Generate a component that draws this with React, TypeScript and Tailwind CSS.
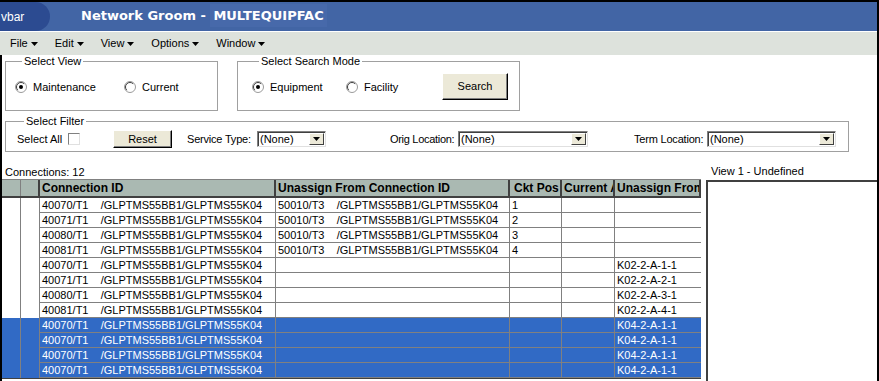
import React from "react";

const SANS = "font-['Liberation_Sans',Arial,sans-serif]";

type Row = {
  conn: string;
  from: string;
  pos: string;
  unassign: string;
  selected?: boolean;
};

const PATH = "/GLPTMS55BB1/GLPTMS55K04";

const rows: Row[] = [
  { conn: "40070/T1", from: "50010/T3", pos: "1", unassign: "" },
  { conn: "40071/T1", from: "50010/T3", pos: "2", unassign: "" },
  { conn: "40080/T1", from: "50010/T3", pos: "3", unassign: "" },
  { conn: "40081/T1", from: "50010/T3", pos: "4", unassign: "" },
  { conn: "40070/T1", from: "", pos: "", unassign: "K02-2-A-1-1" },
  { conn: "40071/T1", from: "", pos: "", unassign: "K02-2-A-2-1" },
  { conn: "40080/T1", from: "", pos: "", unassign: "K02-2-A-3-1" },
  { conn: "40081/T1", from: "", pos: "", unassign: "K02-2-A-4-1" },
  { conn: "40070/T1", from: "", pos: "", unassign: "K04-2-A-1-1", selected: true },
  { conn: "40070/T1", from: "", pos: "", unassign: "K04-2-A-1-1", selected: true },
  { conn: "40070/T1", from: "", pos: "", unassign: "K04-2-A-1-1", selected: true },
  { conn: "40070/T1", from: "", pos: "", unassign: "K04-2-A-1-1", selected: true },
];

const Caret = () => (
  <svg width="7" height="4" viewBox="0 0 7 4" className="ml-[3px]">
    <path d="M0 0h7L3.5 4z" fill="#000" />
  </svg>
);

const Radio = ({ checked }: { checked?: boolean }) => (
  <svg width="12" height="12" viewBox="0 0 12 12" className="shrink-0">
    <circle cx="6" cy="6" r="5.5" fill="#fff" stroke="#9a9a9a" strokeWidth="1" />
    <path d="M2.8 9.2A4.5 4.5 0 0 1 9.2 2.8" stroke="#404040" strokeWidth="1" fill="none" />
    {checked && <circle cx="6" cy="6" r="2" fill="#000" />}
  </svg>
);

const Select = ({ w }: { w: string }) => (
  <div
    className={`${w} shrink-0 h-[16px] flex items-center bg-white border border-t-[#808080] border-l-[#808080] border-b-[#e0e0e0] border-r-[#e0e0e0] shadow-[inset_1px_1px_0_#404040]`}
  >
    <span className="flex-1 pl-[2px] text-[11px] leading-[14px]">(None)</span>
    <div className="w-[15px] h-[12px] mr-[1px] bg-[#ece9d8] border border-t-white border-l-white border-b-[#404040] border-r-[#404040] flex items-center justify-center">
      <svg width="7" height="4" viewBox="0 0 7 4">
        <path d="M0 0h7L3.5 4z" fill="#000" />
      </svg>
    </div>
  </div>
);

const Button = ({ label, className }: { label: string; className: string }) => (
  <div
    className={`${className} shrink-0 bg-[#ece9d8] border border-t-white border-l-white border-b-black border-r-black shadow-[inset_-1px_-1px_0_#808080] flex items-center justify-center text-[11px]`}
  >
    {label}
  </div>
);

const cols = ["w-[19px]", "w-[19px]", "w-[236px]", "w-[234px]", "w-[52px]", "w-[53px]", "w-[86px]"];

export default function App() {
  return (
    <div className={`w-[879px] h-[381px] overflow-hidden bg-white border-t-2 border-r-2 border-black text-black ${SANS}`}>
      {/* title bar */}
      <div className="h-[30px] bg-[#4265a5] flex items-center border-b border-white">
        <div className="w-[50px] h-full rounded-r-full bg-[#2c4b91] flex items-center text-white text-[12px]">
          <span className="pl-[1px]">vbar</span>
        </div>
        <div className="ml-[31px] flex items-center text-white font-bold text-[13px] font-['DejaVu_Sans',Verdana,sans-serif] -mt-[2px]">
          <span className="whitespace-pre">Network Groom - </span>
          <span className="bg-[#4769aa] px-[3px] py-[2px]">MULTEQUIPFAC</span>
        </div>
      </div>

      {/* menu */}
      <div className="h-[23px] bg-[#dde2dc] flex items-center pl-[10px] gap-[17px] text-[11px]">
        {["File", "Edit", "View", "Options", "Window"].map((m) => (
          <div key={m} className="flex items-center">
            <span>{m}</span>
            <Caret />
          </div>
        ))}
      </div>

      {/* content */}
      <div className="border-l-2 border-black h-[326px] flex flex-col text-[11px]">
        <div className="flex pl-[3px] gap-[19px]">
          <fieldset className="w-[213px] h-[56px] border border-[#a0a0a0] pl-[9px] flex items-center">
            <legend className="ml-[7px] px-[2px] leading-[13px]">Select View</legend>
            <div className="flex items-center w-[109px] gap-[6px] pb-[4px]">
              <Radio checked />
              <span>Maintenance</span>
            </div>
            <div className="flex items-center gap-[6px] pb-[4px]">
              <Radio />
              <span>Current</span>
            </div>
          </fieldset>
          <fieldset className="w-[283px] h-[56px] border border-[#a0a0a0] pl-[14px] flex items-center">
            <legend className="ml-[7px] px-[2px] leading-[13px]">Select Search Mode</legend>
            <div className="flex items-center w-[94px] gap-[6px] pb-[4px]">
              <Radio checked />
              <span>Equipment</span>
            </div>
            <div className="flex items-center w-[96px] gap-[6px] pb-[4px]">
              <Radio />
              <span>Facility</span>
            </div>
            <Button label="Search" className="w-[66px] h-[27px] mb-[6px]" />
          </fieldset>
        </div>

        <fieldset className="ml-[3px] mt-[4px] w-[844px] h-[37px] border border-[#a0a0a0] pl-[11px] pt-[2px] flex items-center whitespace-nowrap">
          <legend className="ml-[7px] px-[2px] leading-[13px]">Select Filter</legend>
          <span className="w-[51px] shrink-0">Select All</span>
          <div className="w-[12px] h-[12px] shrink-0 bg-white border border-t-[#808080] border-l-[#808080] border-b-[#e0e0e0] border-r-[#e0e0e0]" />
          <Button label="Reset" className="ml-[33px] w-[59px] h-[18px]" />
          <span className="ml-[15px] w-[70px] shrink-0 tracking-[-0.2px]">Service Type:</span>
          <Select w="w-[69px]" />
          <span className="ml-[64px] w-[68px] shrink-0 tracking-[-0.3px]">Orig Location:</span>
          <Select w="w-[130px]" />
          <span className="ml-[46px] w-[73px] shrink-0 tracking-[-0.2px]">Term Location:</span>
          <Select w="w-[129px]" />
        </fieldset>

        <div className="flex gap-[5px] flex-1">
          {/* grid */}
          <div className="w-[699px] flex flex-col">
            <div className="h-[27px] pt-[13px] pl-[3px] leading-[14px]">Connections: 12</div>
            <div className="border-t border-[#808080] flex-1 flex flex-col overflow-hidden">
              <div className="h-[18px] flex shrink-0 bg-[#aab9b2] border-b-2 border-[#404040] text-[12px] font-bold">
                {["", "", "Connection ID", "Unassign From Connection ID", "Ckt Pos", "Current Assign", "Unassign From Location"].map(
                  (h, i) => (
                    <div
                      key={i}
                      className={`${cols[i]} shrink-0 h-full overflow-hidden whitespace-nowrap leading-[17px] ${
                        i === 0 ? "border-r border-[#808080]" : "border-r-2 border-[#404040]"
                      } ${i === 4 ? "pl-[4px]" : "pl-[2px]"} ${i === 6 ? "border-r-0" : ""}`}
                    >
                      {h}
                    </div>
                  )
                )}
              </div>
              {rows.map((r, idx) => {
                const line = r.selected ? "border-[#7d8aa6]" : "border-[#808080]";
                const cells = [
                  "",
                  "",
                  `${r.conn}    ${PATH}`,
                  r.from ? `${r.from}    ${PATH}` : "",
                  r.pos,
                  "",
                  r.unassign,
                ];
                return (
                  <div
                    key={idx}
                    className={`h-[15px] flex shrink-0 ${r.selected ? "bg-[#316ac5] text-white" : "bg-white"}`}
                  >
                    {cells.map((c, i) => (
                      <div
                        key={i}
                        className={`${cols[i]} shrink-0 h-full overflow-hidden whitespace-pre leading-[14px] pl-[2px] border-[#808080] ${
                          i < 6 ? "border-r" : ""
                        } ${i >= 2 ? `border-b ${line}` : ""}`}
                      >
                        {c}
                      </div>
                    ))}
                  </div>
                );
              })}
              <div className="h-[1px] shrink-0 bg-[#404040]" />
            </div>
          </div>

          {/* right panel */}
          <div className="flex-1 flex flex-col">
            <div className="h-[28px] pt-[12px] pl-[5px] leading-[14px]">View 1 - Undefined</div>
            <div className="flex-1 bg-white border-t-2 border-l-2 border-[#404040]" />
          </div>
        </div>
      </div>
    </div>
  );
}
